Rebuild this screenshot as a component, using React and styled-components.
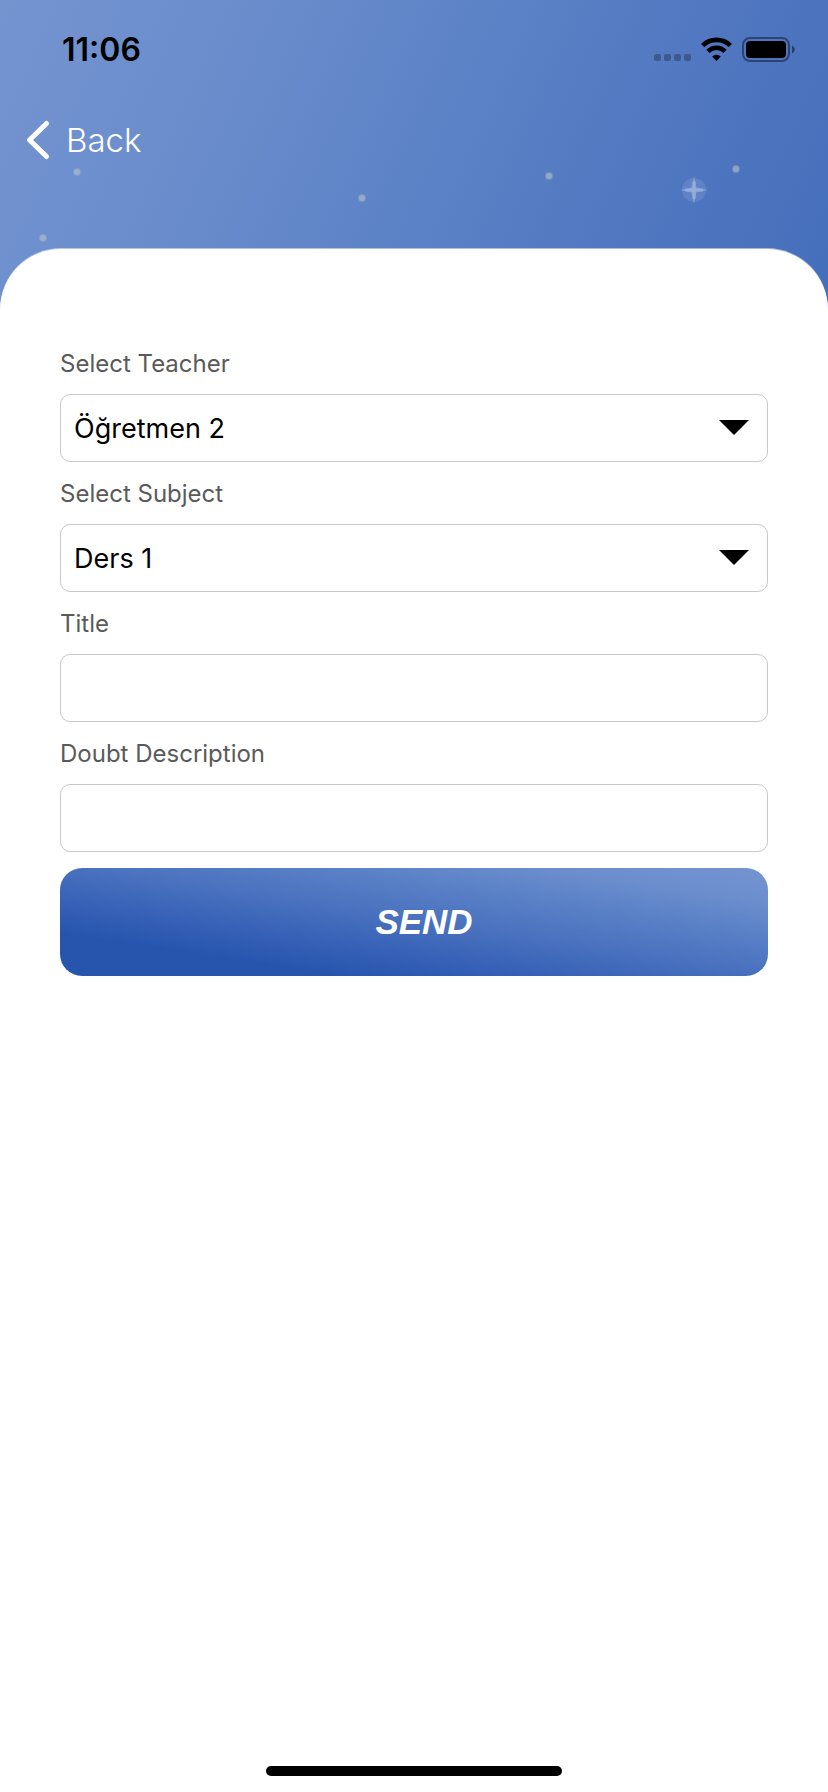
import React, { useState } from "react";
import styled, { createGlobalStyle } from "styled-components";

const GlobalStyle = createGlobalStyle`
  *, *::before, *::after { box-sizing: border-box; }
  body {
    margin: 0;
    background: #fff;
    font-family: Inter, "Liberation Sans", sans-serif;
  }
`;

const Screen = styled.div`
  display: flex;
  flex-direction: column;
  min-height: 100vh;
`;

const Hero = styled.header`
  position: relative;
  padding-bottom: 130px;
  background: linear-gradient(
    114deg,
    #7494d0 0%,
    #6b8dcc 25%,
    #5d83c7 50%,
    #5077c0 76%,
    #456ebb 100%
  );
`;

const Stars = styled.svg`
  position: absolute;
  inset: 0;
  width: 100%;
  height: 100%;
`;

const StatusBar = styled.div`
  position: relative;
  display: flex;
  align-items: center;
  justify-content: space-between;
  height: 100px;
  padding: 0 33px 0 62px;
`;

const Clock = styled.time`
  font-size: 32px;
  line-height: 40px;
  font-weight: 600;
  color: #000;
`;

const StatusIcons = styled.div`
  display: flex;
  align-items: center;
  gap: 10px;
`;

const NavBar = styled.nav`
  position: relative;
  display: flex;
  height: 80px;
  padding: 0 26px;
`;

const BackButton = styled.button`
  display: flex;
  align-items: center;
  gap: 16px;
  height: 80px;
  padding: 0;
  border: 0;
  background: none;
  font: inherit;
  font-size: 33px;
  line-height: 40px;
  font-weight: 300;
  color: #fff;
  cursor: pointer;
`;

const Sheet = styled.main`
  position: relative;
  flex: 1;
  display: flex;
  flex-direction: column;
  margin-top: -61px;
  padding: 99px 60px 16px;
  border-radius: 61px 61px 0 0;
  background: #fff;
  box-shadow: 0 -1px 0 rgba(255, 255, 255, 0.5);
`;

const Form = styled.form`
  display: flex;
  flex-direction: column;
  gap: 16px;
`;

const FieldGroup = styled.div`
  display: flex;
  flex-direction: column;
  gap: 14px;
`;

const Label = styled.label`
  font-size: 24px;
  line-height: 32px;
  color: #5a5a5a;
`;

const controlStyles = `
  width: 100%;
  height: 68px;
  padding: 0 13px;
  border: 1px solid #c9c9c9;
  border-radius: 10px;
  background: #fff;
  font: inherit;
  font-size: 27px;
  color: #000;
`;

const TextInput = styled.input`
  ${controlStyles}
`;

const SelectBox = styled.div`
  display: grid;
  align-items: center;
  & > * { grid-area: 1 / 1; }
`;

const SelectInput = styled.select`
  ${controlStyles}
  appearance: none;
`;

const Caret = styled.svg`
  justify-self: end;
  margin-right: 19px;
  pointer-events: none;
`;

const SendButton = styled.button`
  height: 108px;
  padding: 0 0 0 20px;
  border: 0;
  border-radius: 22px;
  background: linear-gradient(
    to top right,
    #2755ae 0%,
    #2755ae 20%,
    #3560b6 33%,
    #4a72bf 52%,
    #5b82c7 70%,
    #6c8ecd 85%,
    #7494d0 100%
  );
  font-family: "Liberation Sans", Arial, sans-serif;
  font-size: 35px;
  font-weight: 700;
  font-style: italic;
  color: #fff;
  cursor: pointer;
`;

const HomeIndicator = styled.div`
  align-self: center;
  width: 296px;
  height: 10px;
  margin-top: auto;
  border-radius: 5px;
  background: #000;
`;

const dots = [
  [77, 172],
  [43, 238],
  [362, 198],
  [549, 176],
  [736, 169],
];

function StarField() {
  return (
    <Stars viewBox="0 0 828 310" preserveAspectRatio="xMidYMin slice" aria-hidden="true">
      {dots.map(([x, y]) => (
        <g key={x} fill="#b4bfca">
          <circle cx={x} cy={y} r="4" opacity="0.3" />
          <circle cx={x} cy={y} r="3" opacity="0.5" />
        </g>
      ))}
      <circle cx="694" cy="190" r="12" fill="#8ea9dc" opacity="0.28" />
      <path
        d="M694 176 L696.500 187.500 L708 190 L696.500 192.500 L694 204 L691.500 192.500 L680 190 L691.500 187.500 Z"
        fill="#b3c5ea"
        opacity="0.4"
      />
      <path d="M694 181V199M685 190H703" stroke="#b3c5ea" strokeWidth="3" opacity="0.4" />
    </Stars>
  );
}

function SignalDots() {
  return (
    <svg width="37" height="26" viewBox="0 0 37 26" fill="#000" opacity="0.25" aria-hidden="true">
      {[0, 10, 20, 30].map((x) => (
        <rect key={x} x={x} y="17" width="7" height="7" rx="2" />
      ))}
    </svg>
  );
}

function WifiIcon() {
  return (
    <svg width="31" height="26" viewBox="0 0 31 26" aria-hidden="true">
      <g fill="none" stroke="#000" strokeWidth="4.700">
        <path d="M1.700 8.600 A19.600 19.600 0 0 1 29.300 8.600" />
        <path d="M7 14.300 A12 12 0 0 1 24 14.300" />
      </g>
      <path d="M15.500 24 L11.200 19.600 A6.200 6.200 0 0 1 19.800 19.600 Z" />
    </svg>
  );
}

function BatteryIcon() {
  return (
    <svg width="53" height="26" viewBox="0 0 53 26" aria-hidden="true">
      <rect x="1" y="1" width="46" height="23" rx="7" fill="none" stroke="#000" strokeOpacity="0.42" strokeWidth="2" />
      <rect x="4" y="4" width="40" height="17" rx="4" />
      <path d="M50 8.500 C53.700 10 53.700 15 50 16.500 Z" opacity="0.45" />
    </svg>
  );
}

function BackChevron() {
  return (
    <svg width="24" height="40" viewBox="0 0 24 40" fill="none" aria-hidden="true">
      <path d="M20.500 3.500 L3.500 20 L20.500 36.500" stroke="#fff" strokeWidth="5" strokeLinecap="round" strokeLinejoin="round" />
    </svg>
  );
}

function SelectField({ id, label, options, initial }) {
  const [value, setValue] = useState(initial);
  return (
    <FieldGroup>
      <Label htmlFor={id}>{label}</Label>
      <SelectBox>
        <SelectInput id={id} value={value} onChange={(e) => setValue(e.target.value)}>
          {options.map((option) => (
            <option key={option}>{option}</option>
          ))}
        </SelectInput>
        <Caret width="30" height="16" viewBox="0 0 30 16" aria-hidden="true">
          <path d="M0 0H30L15 15Z" />
        </Caret>
      </SelectBox>
    </FieldGroup>
  );
}

function TextField({ id, label }) {
  return (
    <FieldGroup>
      <Label htmlFor={id}>{label}</Label>
      <TextInput id={id} type="text" />
    </FieldGroup>
  );
}

export default function App() {
  return (
    <Screen>
      <GlobalStyle />
      <Hero>
        <StarField />
        <StatusBar>
          <Clock>11:06</Clock>
          <StatusIcons>
            <SignalDots />
            <WifiIcon />
            <BatteryIcon />
          </StatusIcons>
        </StatusBar>
        <NavBar>
          <BackButton type="button">
            <BackChevron />
            Back
          </BackButton>
        </NavBar>
      </Hero>
      <Sheet>
        <Form onSubmit={(e) => e.preventDefault()}>
          <SelectField id="teacher" label="Select Teacher" options={["Öğretmen 2"]} initial="Öğretmen 2" />
          <SelectField id="subject" label="Select Subject" options={["Ders 1"]} initial="Ders 1" />
          <TextField id="title" label="Title" />
          <TextField id="description" label="Doubt Description" />
          <SendButton type="submit">SEND</SendButton>
        </Form>
        <HomeIndicator />
      </Sheet>
    </Screen>
  );
}
